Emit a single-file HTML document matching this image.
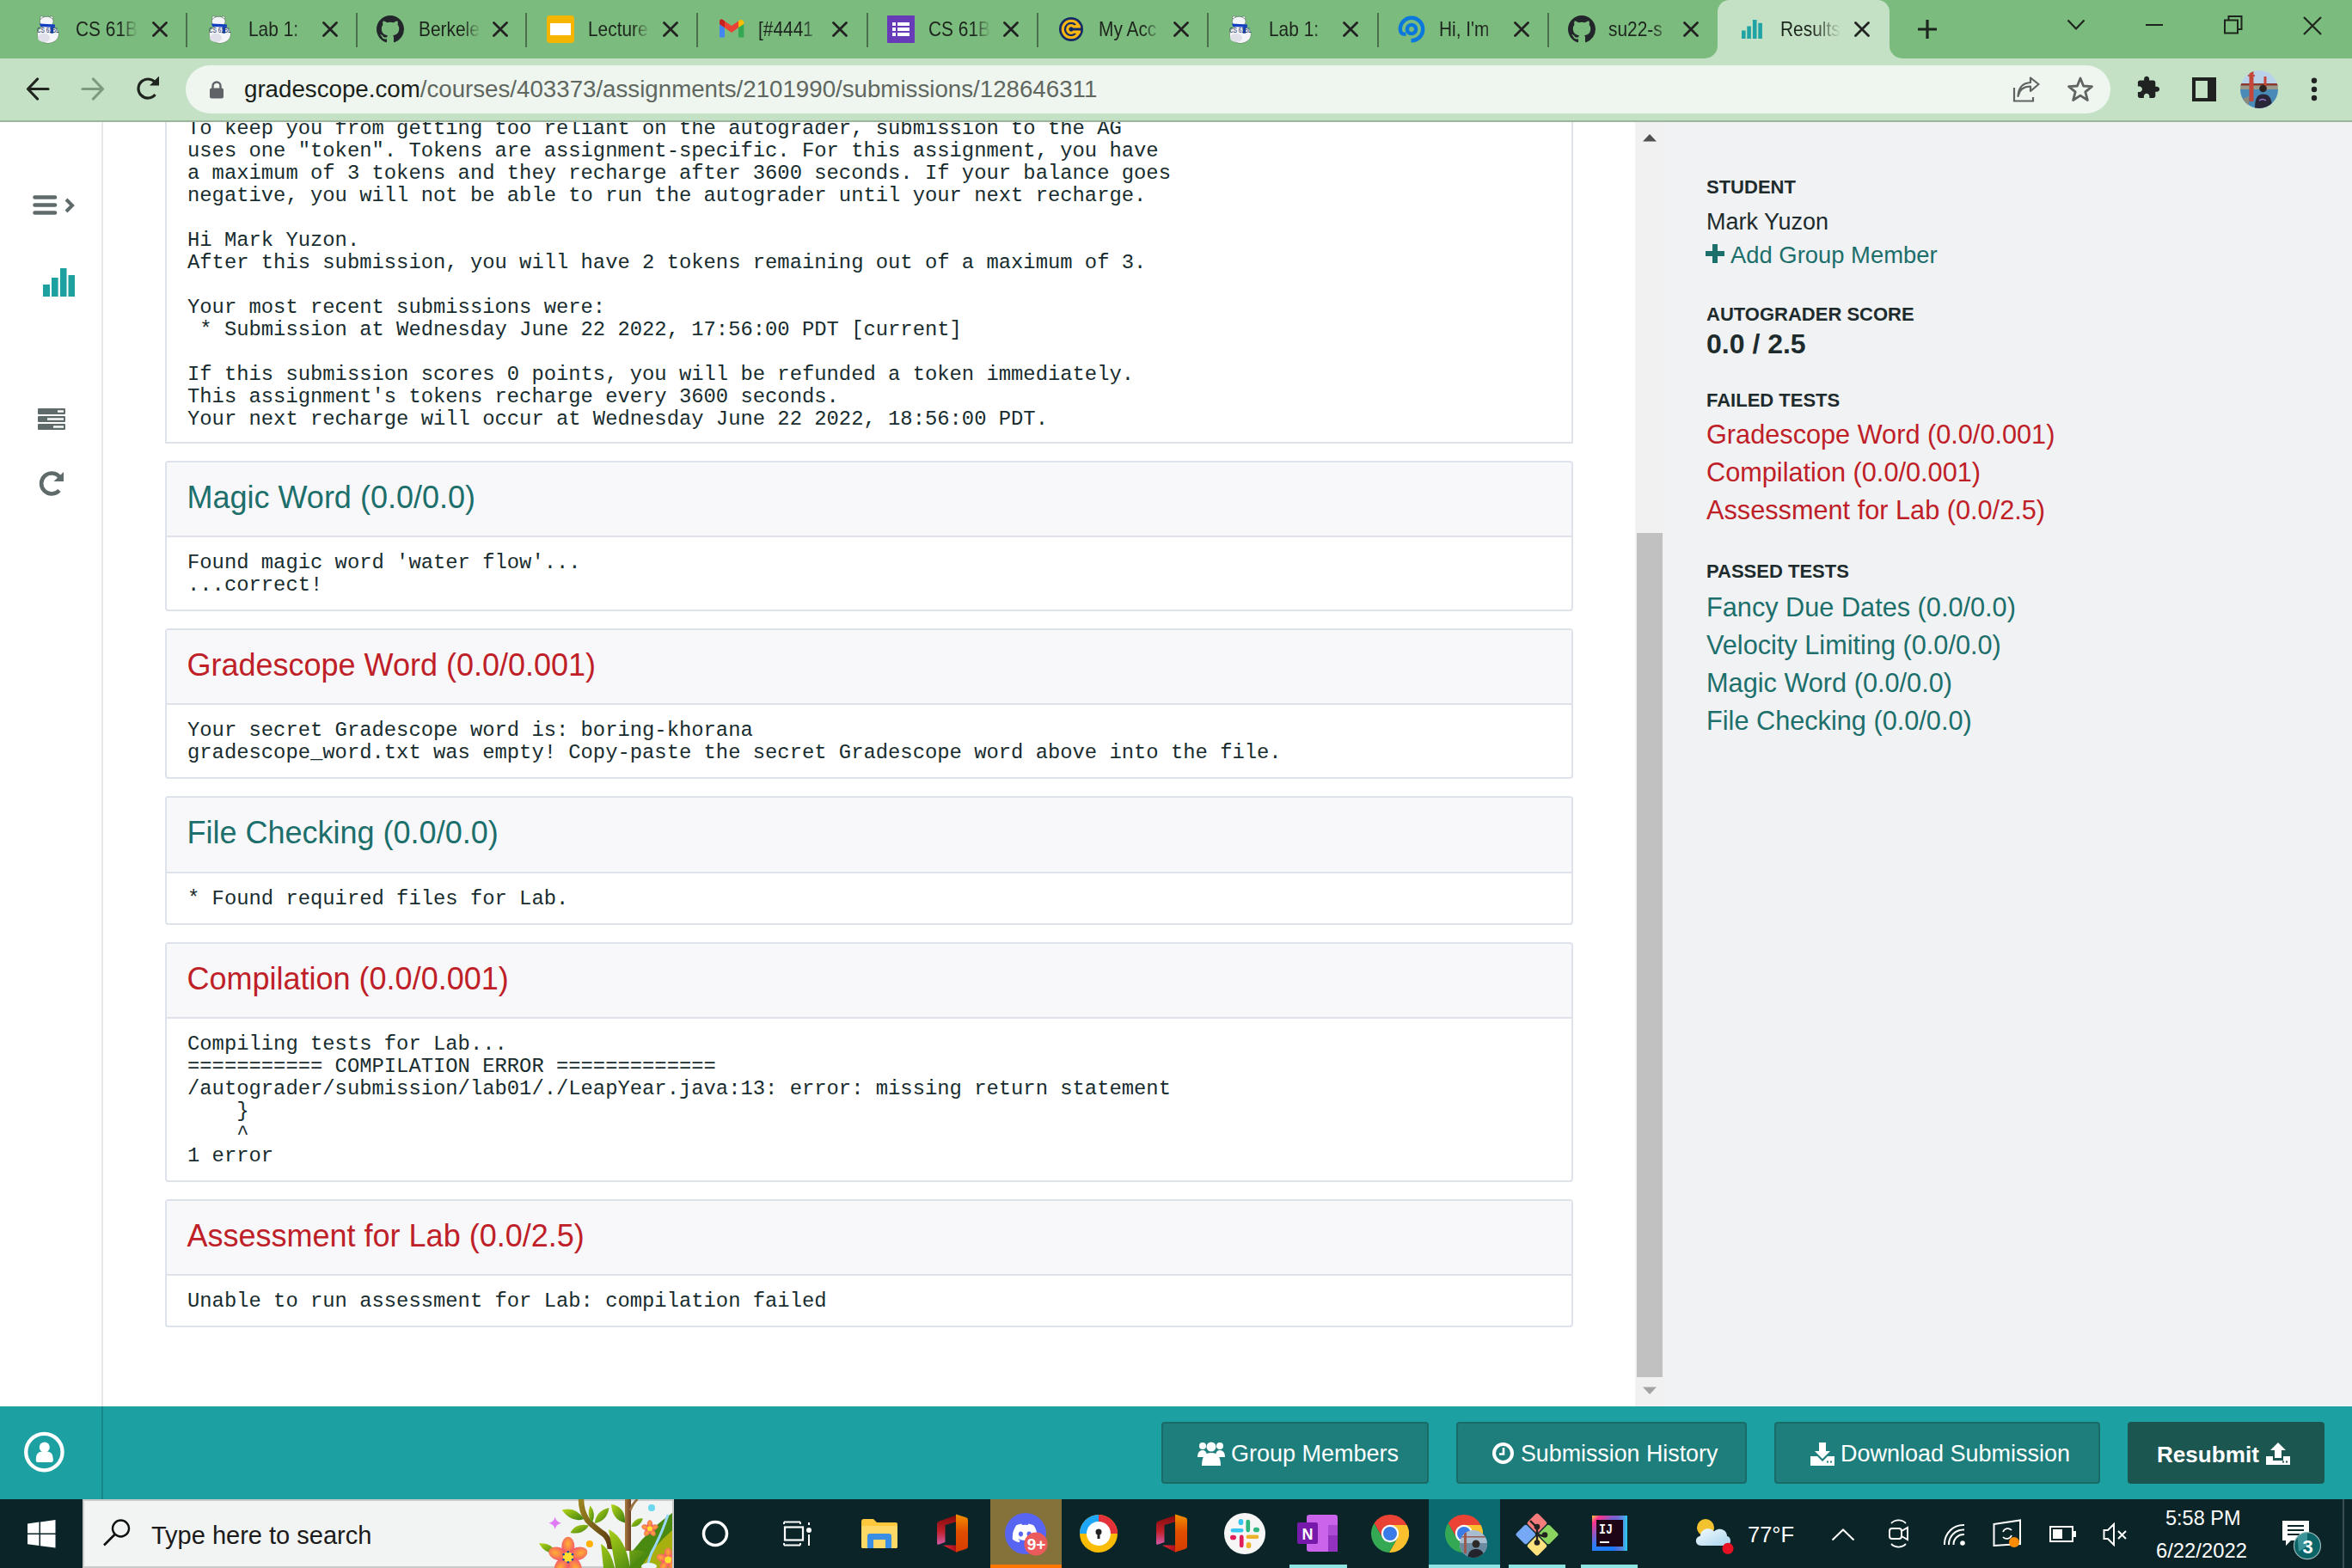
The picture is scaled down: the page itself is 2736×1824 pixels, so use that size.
<!DOCTYPE html><html><head><meta charset="utf-8"><style>html,body{margin:0;padding:0;width:2736px;height:1824px;overflow:hidden;background:#fff;position:relative}</style></head><body>
<div style="position:absolute;left:0px;top:0px;width:2736px;height:68px;background:#7bbb7d;"></div>
<div style="position:absolute;left:1998px;top:0px;width:200px;height:68px;background:#c4e1c5;border-radius:14px 14px 0 0"></div>
<svg style="position:absolute;left:1983px;top:53px;" width="15" height="15" viewBox="0 0 15 15"><path d="M15 0 V15 H0 A15 15 0 0 0 15 0Z" fill="#c4e1c5"/></svg>
<svg style="position:absolute;left:2198px;top:53px;" width="15" height="15" viewBox="0 0 15 15"><path d="M0 0 V15 H15 A15 15 0 0 1 0 0Z" fill="#c4e1c5"/></svg>
<svg style="position:absolute;left:41px;top:18px;" width="30" height="34" viewBox="0 0 30 34"><g fill="#f4f5f9" stroke="#55705a" stroke-width="0.7"><ellipse cx="14.85" cy="22" rx="12.3" ry="10.3"/><circle cx="7.7" cy="2.6" r="2.1"/><circle cx="18.8" cy="2.8" r="2.1"/><ellipse cx="13.2" cy="7" rx="8" ry="5.8"/></g><ellipse cx="14.85" cy="22" rx="12" ry="10" fill="#f4f5f9"/><ellipse cx="10" cy="26" rx="7" ry="5" fill="#dfe0e8"/><path d="M5 9.4 L22.9 10.4 V13.7 L6.2 13Z" fill="#1240c0"/><rect x="17.7" y="12" width="3.4" height="8.8" fill="#1846c0"/><text x="2" y="20.3" font-size="9" font-family="Liberation Sans" fill="#1d3468" textLength="25.7" lengthAdjust="spacingAndGlyphs">CS 61BL</text></svg>
<div style="position:absolute;left:88px;top:14px;width:83px;height:40px;overflow:hidden;font:24px/40px 'Liberation Sans', sans-serif;color:#1d241d;white-space:pre;transform:scaleX(0.87);transform-origin:0 0;-webkit-mask-image:linear-gradient(90deg,#000 72%,transparent 100%)">CS 61B</div>
<svg style="position:absolute;left:177px;top:25px;" width="18" height="18" viewBox="0 0 18 18"><path d="M1.5 1.5 L16.5 16.5 M16.5 1.5 L1.5 16.5" stroke="#222" stroke-width="2.8" stroke-linecap="round"/></svg>
<svg style="position:absolute;left:241px;top:18px;" width="30" height="34" viewBox="0 0 30 34"><g fill="#f4f5f9" stroke="#55705a" stroke-width="0.7"><ellipse cx="14.85" cy="22" rx="12.3" ry="10.3"/><circle cx="7.7" cy="2.6" r="2.1"/><circle cx="18.8" cy="2.8" r="2.1"/><ellipse cx="13.2" cy="7" rx="8" ry="5.8"/></g><ellipse cx="14.85" cy="22" rx="12" ry="10" fill="#f4f5f9"/><ellipse cx="10" cy="26" rx="7" ry="5" fill="#dfe0e8"/><path d="M5 9.4 L22.9 10.4 V13.7 L6.2 13Z" fill="#1240c0"/><rect x="17.7" y="12" width="3.4" height="8.8" fill="#1846c0"/><text x="2" y="20.3" font-size="9" font-family="Liberation Sans" fill="#1d3468" textLength="25.7" lengthAdjust="spacingAndGlyphs">CS 61BL</text></svg>
<div style="position:absolute;left:289px;top:14px;width:83px;height:40px;overflow:hidden;font:24px/40px 'Liberation Sans', sans-serif;color:#1d241d;white-space:pre;transform:scaleX(0.87);transform-origin:0 0;-webkit-mask-image:linear-gradient(90deg,#000 72%,transparent 100%)">Lab 1: </div>
<svg style="position:absolute;left:375px;top:25px;" width="18" height="18" viewBox="0 0 18 18"><path d="M1.5 1.5 L16.5 16.5 M16.5 1.5 L1.5 16.5" stroke="#222" stroke-width="2.8" stroke-linecap="round"/></svg>
<svg style="position:absolute;left:438px;top:18px;" width="32" height="32" viewBox="0 0 32 32"><path transform="scale(2)" fill="#22262a" d="M8 0C3.58 0 0 3.58 0 8c0 3.54 2.29 6.53 5.47 7.59.4.07.55-.17.55-.38 0-.19-.01-.82-.01-1.49-2.01.37-2.53-.49-2.69-.94-.09-.23-.48-.94-.82-1.13-.28-.15-.68-.52-.01-.53.63-.01 1.08.58 1.23.82.72 1.21 1.87.87 2.33.66.07-.52.28-.87.51-1.07-1.78-.2-3.64-.89-3.64-3.95 0-.87.31-1.59.82-2.15-.08-.2-.36-1.02.08-2.12 0 0 .67-.21 2.2.82.64-.18 1.32-.27 2-.27.68 0 1.36.09 2 .27 1.53-1.04 2.2-.82 2.2-.82.44 1.1.16 1.92.08 2.12.51.56.82 1.27.82 2.15 0 3.07-1.87 3.75-3.65 3.95.29.25.54.73.54 1.48 0 1.07-.01 1.93-.01 2.2 0 .21.15.46.55.38A8.013 8.013 0 0016 8c0-4.42-3.58-8-8-8z"/></svg>
<div style="position:absolute;left:487px;top:14px;width:83px;height:40px;overflow:hidden;font:24px/40px 'Liberation Sans', sans-serif;color:#1d241d;white-space:pre;transform:scaleX(0.87);transform-origin:0 0;-webkit-mask-image:linear-gradient(90deg,#000 72%,transparent 100%)">Berkeley</div>
<svg style="position:absolute;left:573px;top:25px;" width="18" height="18" viewBox="0 0 18 18"><path d="M1.5 1.5 L16.5 16.5 M16.5 1.5 L1.5 16.5" stroke="#222" stroke-width="2.8" stroke-linecap="round"/></svg>
<svg style="position:absolute;left:636px;top:18px;" width="32" height="32" viewBox="0 0 32 32"><rect x="0" y="0" width="32" height="32" rx="3.5" fill="#f4b400"/><rect x="4" y="9" width="24" height="14" fill="#fff"/></svg>
<div style="position:absolute;left:684px;top:14px;width:83px;height:40px;overflow:hidden;font:24px/40px 'Liberation Sans', sans-serif;color:#1d241d;white-space:pre;transform:scaleX(0.87);transform-origin:0 0;-webkit-mask-image:linear-gradient(90deg,#000 72%,transparent 100%)">Lecture</div>
<svg style="position:absolute;left:771px;top:25px;" width="18" height="18" viewBox="0 0 18 18"><path d="M1.5 1.5 L16.5 16.5 M16.5 1.5 L1.5 16.5" stroke="#222" stroke-width="2.8" stroke-linecap="round"/></svg>
<svg style="position:absolute;left:836px;top:22px;" width="30" height="24" viewBox="0 0 30 24"><rect x="1" y="6" width="6" height="15.5" rx="1" fill="#4285f4"/><rect x="23" y="6" width="6.3" height="15.5" rx="1" fill="#34a853"/><path d="M1 3.5 Q1 0 4 0.6 L15 8 L23 2.5 V10 L15 16 L1 6Z" fill="#ea4335"/><path d="M23 2.5 Q26.5 -0.5 29.3 3 V6 L23 10Z" fill="#fbbc04"/><path d="M1 3.5 Q1 0 4 0.6 L7 2.5 V10 L1 6Z" fill="#c5221f"/></svg>
<div style="position:absolute;left:882px;top:14px;width:83px;height:40px;overflow:hidden;font:24px/40px 'Liberation Sans', sans-serif;color:#1d241d;white-space:pre;transform:scaleX(0.87);transform-origin:0 0;-webkit-mask-image:linear-gradient(90deg,#000 72%,transparent 100%)">[#4441</div>
<svg style="position:absolute;left:968px;top:25px;" width="18" height="18" viewBox="0 0 18 18"><path d="M1.5 1.5 L16.5 16.5 M16.5 1.5 L1.5 16.5" stroke="#222" stroke-width="2.8" stroke-linecap="round"/></svg>
<svg style="position:absolute;left:1032px;top:18px;" width="32" height="32" viewBox="0 0 32 32"><rect x="0" y="0" width="32" height="32" rx="1" fill="#673ab7"/><g fill="#fff"><rect x="6" y="8" width="4" height="4"/><rect x="6" y="14" width="4" height="4"/><rect x="6" y="20" width="4" height="4"/><rect x="12" y="8" width="14" height="4"/><rect x="12" y="14" width="14" height="4"/><rect x="12" y="20" width="14" height="4"/></g></svg>
<div style="position:absolute;left:1080px;top:14px;width:83px;height:40px;overflow:hidden;font:24px/40px 'Liberation Sans', sans-serif;color:#1d241d;white-space:pre;transform:scaleX(0.87);transform-origin:0 0;-webkit-mask-image:linear-gradient(90deg,#000 72%,transparent 100%)">CS 61B</div>
<svg style="position:absolute;left:1167px;top:25px;" width="18" height="18" viewBox="0 0 18 18"><path d="M1.5 1.5 L16.5 16.5 M16.5 1.5 L1.5 16.5" stroke="#222" stroke-width="2.8" stroke-linecap="round"/></svg>
<svg style="position:absolute;left:1230px;top:18px;" width="32" height="32" viewBox="0 0 32 32"><circle cx="16" cy="16" r="14" fill="#142c66"/><circle cx="16" cy="16" r="9.75" fill="none" stroke="#fbb614" stroke-width="3.1"/><circle cx="16" cy="16" r="4.15" fill="none" stroke="#fbb614" stroke-width="3.5"/><path d="M19.5 12 L23 9.5 L27 12 V20 L23 22.5 L19.5 20Z" fill="#fbb614"/><rect x="15" y="14.55" width="14" height="2.9" fill="#142c66"/><circle cx="16" cy="16" r="2.5" fill="#142c66"/></svg>
<div style="position:absolute;left:1278px;top:14px;width:83px;height:40px;overflow:hidden;font:24px/40px 'Liberation Sans', sans-serif;color:#1d241d;white-space:pre;transform:scaleX(0.87);transform-origin:0 0;-webkit-mask-image:linear-gradient(90deg,#000 72%,transparent 100%)">My Acc</div>
<svg style="position:absolute;left:1365px;top:25px;" width="18" height="18" viewBox="0 0 18 18"><path d="M1.5 1.5 L16.5 16.5 M16.5 1.5 L1.5 16.5" stroke="#222" stroke-width="2.8" stroke-linecap="round"/></svg>
<svg style="position:absolute;left:1428px;top:18px;" width="30" height="34" viewBox="0 0 30 34"><g fill="#f4f5f9" stroke="#55705a" stroke-width="0.7"><ellipse cx="14.85" cy="22" rx="12.3" ry="10.3"/><circle cx="7.7" cy="2.6" r="2.1"/><circle cx="18.8" cy="2.8" r="2.1"/><ellipse cx="13.2" cy="7" rx="8" ry="5.8"/></g><ellipse cx="14.85" cy="22" rx="12" ry="10" fill="#f4f5f9"/><ellipse cx="10" cy="26" rx="7" ry="5" fill="#dfe0e8"/><path d="M5 9.4 L22.9 10.4 V13.7 L6.2 13Z" fill="#1240c0"/><rect x="17.7" y="12" width="3.4" height="8.8" fill="#1846c0"/><text x="2" y="20.3" font-size="9" font-family="Liberation Sans" fill="#1d3468" textLength="25.7" lengthAdjust="spacingAndGlyphs">CS 61BL</text></svg>
<div style="position:absolute;left:1476px;top:14px;width:83px;height:40px;overflow:hidden;font:24px/40px 'Liberation Sans', sans-serif;color:#1d241d;white-space:pre;transform:scaleX(0.87);transform-origin:0 0;-webkit-mask-image:linear-gradient(90deg,#000 72%,transparent 100%)">Lab 1: </div>
<svg style="position:absolute;left:1562px;top:25px;" width="18" height="18" viewBox="0 0 18 18"><path d="M1.5 1.5 L16.5 16.5 M16.5 1.5 L1.5 16.5" stroke="#222" stroke-width="2.8" stroke-linecap="round"/></svg>
<svg style="position:absolute;left:1626px;top:18px;" width="34" height="34" viewBox="0 0 34 34"><g fill="none" stroke="#0a78dc" stroke-width="4.4"><path d="M15.5 29.2 A13.2 13.2 0 1 0 2.8 16 Q3 22.5 9.5 21.5"/><circle cx="16" cy="16" r="5.1"/></g></svg>
<div style="position:absolute;left:1674px;top:14px;width:83px;height:40px;overflow:hidden;font:24px/40px 'Liberation Sans', sans-serif;color:#1d241d;white-space:pre;transform:scaleX(0.87);transform-origin:0 0;-webkit-mask-image:linear-gradient(90deg,#000 72%,transparent 100%)">Hi, I'm</div>
<svg style="position:absolute;left:1761px;top:25px;" width="18" height="18" viewBox="0 0 18 18"><path d="M1.5 1.5 L16.5 16.5 M16.5 1.5 L1.5 16.5" stroke="#222" stroke-width="2.8" stroke-linecap="round"/></svg>
<svg style="position:absolute;left:1824px;top:18px;" width="32" height="32" viewBox="0 0 32 32"><path transform="scale(2)" fill="#22262a" d="M8 0C3.58 0 0 3.58 0 8c0 3.54 2.29 6.53 5.47 7.59.4.07.55-.17.55-.38 0-.19-.01-.82-.01-1.49-2.01.37-2.53-.49-2.69-.94-.09-.23-.48-.94-.82-1.13-.28-.15-.68-.52-.01-.53.63-.01 1.08.58 1.23.82.72 1.21 1.87.87 2.33.66.07-.52.28-.87.51-1.07-1.78-.2-3.64-.89-3.64-3.95 0-.87.31-1.59.82-2.15-.08-.2-.36-1.02.08-2.12 0 0 .67-.21 2.2.82.64-.18 1.32-.27 2-.27.68 0 1.36.09 2 .27 1.53-1.04 2.2-.82 2.2-.82.44 1.1.16 1.92.08 2.12.51.56.82 1.27.82 2.15 0 3.07-1.87 3.75-3.65 3.95.29.25.54.73.54 1.48 0 1.07-.01 1.93-.01 2.2 0 .21.15.46.55.38A8.013 8.013 0 0016 8c0-4.42-3.58-8-8-8z"/></svg>
<div style="position:absolute;left:1871px;top:14px;width:83px;height:40px;overflow:hidden;font:24px/40px 'Liberation Sans', sans-serif;color:#1d241d;white-space:pre;transform:scaleX(0.87);transform-origin:0 0;-webkit-mask-image:linear-gradient(90deg,#000 72%,transparent 100%)">su22-s</div>
<svg style="position:absolute;left:1958px;top:25px;" width="18" height="18" viewBox="0 0 18 18"><path d="M1.5 1.5 L16.5 16.5 M16.5 1.5 L1.5 16.5" stroke="#222" stroke-width="2.8" stroke-linecap="round"/></svg>
<div style="position:absolute;left:215.5px;top:15px;width:2px;height:40px;background:#4b6e4c;"></div>
<div style="position:absolute;left:413.5px;top:15px;width:2px;height:40px;background:#4b6e4c;"></div>
<div style="position:absolute;left:611px;top:15px;width:2px;height:40px;background:#4b6e4c;"></div>
<div style="position:absolute;left:810px;top:15px;width:2px;height:40px;background:#4b6e4c;"></div>
<div style="position:absolute;left:1007.5px;top:15px;width:2px;height:40px;background:#4b6e4c;"></div>
<div style="position:absolute;left:1206px;top:15px;width:2px;height:40px;background:#4b6e4c;"></div>
<div style="position:absolute;left:1404px;top:15px;width:2px;height:40px;background:#4b6e4c;"></div>
<div style="position:absolute;left:1602px;top:15px;width:2px;height:40px;background:#4b6e4c;"></div>
<div style="position:absolute;left:1800px;top:15px;width:2px;height:40px;background:#4b6e4c;"></div>
<svg style="position:absolute;left:2026px;top:23px;" width="27" height="24" viewBox="0 0 27 24"><g transform="scale(1.0)"><rect x="0" y="12.5" width="4.6" height="9.5" fill="#1fa3a5"/><rect x="6.3" y="7.5" width="4.6" height="14.5" fill="#1fa3a5"/><rect x="12.9" y="0" width="4.6" height="22" fill="#1fa3a5"/><rect x="19.3" y="3.8" width="4.6" height="18.2" fill="#1fa3a5"/></g></svg>
<div style="position:absolute;left:2071px;top:14px;width:83px;height:40px;overflow:hidden;font:24px/40px 'Liberation Sans', sans-serif;color:#1d241d;white-space:pre;transform:scaleX(0.87);transform-origin:0 0;-webkit-mask-image:linear-gradient(90deg,#000 52%,transparent 98%)">Results</div>
<svg style="position:absolute;left:2157px;top:25px;" width="18" height="18" viewBox="0 0 18 18"><path d="M1.5 1.5 L16.5 16.5 M16.5 1.5 L1.5 16.5" stroke="#222" stroke-width="2.8" stroke-linecap="round"/></svg>
<svg style="position:absolute;left:2230px;top:22px;" width="24" height="24" viewBox="0 0 24 24"><path d="M12 1 V23 M1 12 H23" stroke="#1d241d" stroke-width="3.2"/></svg>
<svg style="position:absolute;left:2404px;top:22px;" width="22" height="14" viewBox="0 0 22 14"><path d="M1.5 1.5 L11 11.5 L20.5 1.5" fill="none" stroke="#1d241d" stroke-width="2.2"/></svg>
<div style="position:absolute;left:2496px;top:28px;width:20px;height:2px;background:#1d241d;"></div>
<svg style="position:absolute;left:2587px;top:18px;" width="22" height="22" viewBox="0 0 22 22"><rect x="1" y="5.5" width="15" height="15" fill="none" stroke="#1d241d" stroke-width="2"/><path d="M5.5 5.5 V1 H20.5 V16 H16" fill="none" stroke="#1d241d" stroke-width="2"/></svg>
<svg style="position:absolute;left:2679px;top:19px;" width="22" height="22" viewBox="0 0 22 22"><path d="M1 1 L21 21 M21 1 L1 21" stroke="#1d241d" stroke-width="2.2"/></svg>
<div style="position:absolute;left:0px;top:68px;width:2736px;height:72px;background:#c4e1c5;"></div>
<div style="position:absolute;left:0px;top:140px;width:2736px;height:2px;background:#9cb69d;"></div>
<svg style="position:absolute;left:30px;top:90px;" width="28" height="28" viewBox="0 0 28 28"><path d="M26 13.5 H4 M13.5 2 L2.5 13.5 L13.5 25" fill="none" stroke="#1f241f" stroke-width="3.2" stroke-linecap="round" stroke-linejoin="round"/></svg>
<svg style="position:absolute;left:94px;top:90px;" width="28" height="28" viewBox="0 0 28 28"><path d="M2 13.5 H24 M14.5 2 L25.5 13.5 L14.5 25" fill="none" stroke="#7d9a7e" stroke-width="3.2" stroke-linecap="round" stroke-linejoin="round"/></svg>
<svg style="position:absolute;left:157px;top:89px;" width="30" height="30" viewBox="0 0 30 30"><path d="M23.5 21 A11 11 0 1 1 24.5 8.5" fill="none" stroke="#1f241f" stroke-width="3.2"/><path d="M17 10.5 L28 10.5 L28 -0.5Z" fill="#1f241f"/></svg>
<div style="position:absolute;left:216px;top:76px;width:2239px;height:56px;background:#eff6ef;border-radius:28px"></div>
<svg style="position:absolute;left:243px;top:93px;" width="18" height="22" viewBox="0 0 18 22"><path d="M4.5 10 V7 A4.5 4.5 0 0 1 13.5 7 V10" fill="none" stroke="#5f6368" stroke-width="2.4"/><rect x="1" y="9.5" width="16" height="12" rx="2" fill="#5f6368"/></svg>
<div style="position:absolute;left:284px;top:84px;font:27.7px/40px 'Liberation Sans', sans-serif;color:#5f6760;white-space:pre"><span style="color:#1a1f1a">gradescope.com</span>/courses/403373/assignments/2101990/submissions/128646311</div>
<svg style="position:absolute;left:2340px;top:89px;" width="34" height="31" viewBox="0 0 34 31"><path d="M3 13 V28.5 H25 V24" fill="none" stroke="#606362" stroke-width="2.2"/><path d="M7.5 23 C9 15 14.5 11.5 22 11.5 V17 L31.5 9 L22 1.5 V7 C13 7.5 8 13.5 7.5 23Z" fill="none" stroke="#606362" stroke-width="2.2" stroke-linejoin="round"/></svg>
<svg style="position:absolute;left:2404px;top:88px;" width="32" height="31" viewBox="0 0 32 31"><path d="M16 3 L19.6 12 L29.5 12.6 L21.8 18.8 L24.4 28.5 L16 23.1 L7.6 28.5 L10.2 18.8 L2.5 12.6 L12.4 12Z" fill="none" stroke="#606362" stroke-width="2.8" stroke-linejoin="round"/></svg>
<svg style="position:absolute;left:2485px;top:88px;" width="30" height="30" viewBox="0 0 30 30"><path transform="translate(-0.5 -0.5) scale(1.2)" fill="#1f2220" d="M20.5 11H19V7c0-1.1-.9-2-2-2h-4V3.5C13 2.12 11.88 1 10.5 1S8 2.12 8 3.5V5H4c-1.1 0-1.99.9-1.99 2v3.8H3.5c1.49 0 2.7 1.21 2.7 2.7s-1.21 2.7-2.7 2.7H2V20c0 1.1.9 2 2 2h3.8v-1.5c0-1.49 1.21-2.7 2.7-2.7 1.49 0 2.7 1.21 2.7 2.7V22H17c1.1 0 2-.9 2-2v-4h1.5c1.38 0 2.5-1.12 2.5-2.5S21.88 11 20.5 11z"/></svg>
<svg style="position:absolute;left:2550px;top:90px;" width="28" height="28" viewBox="0 0 28 28"><rect x="2" y="2" width="24" height="24" fill="none" stroke="#1f2220" stroke-width="4"/><rect x="18" y="0" width="10" height="28" fill="#1f2220"/></svg>
<svg style="position:absolute;left:2606px;top:82px;" width="44" height="44" viewBox="0 0 44 44"><defs><clipPath id="av"><circle cx="22" cy="22" r="22"/></clipPath></defs><g clip-path="url(#av)"><rect width="44" height="44" fill="#b8d2ea"/><rect y="16" width="44" height="6" fill="#9a9a8a"/><rect y="22" width="44" height="22" fill="#4a8ab8"/><rect y="15" width="44" height="2.5" fill="#8a3a30"/><rect x="10.5" y="0" width="5" height="36" fill="#c4473a"/><rect x="9" y="5" width="8" height="1.8" fill="#c4473a"/><rect x="27.5" y="7" width="3" height="16" fill="#c4473a"/><path d="M0 34 L10 30 L10 44 L0 44Z" fill="#8a8a7a"/><circle cx="26.5" cy="21" r="4.3" fill="#2a2522"/><path d="M17 44 C17 32 20 27.5 26.5 27.5 C33 27.5 37 31 37 44Z" fill="#2a2838"/><path d="M22 35 Q26 32 30 35" stroke="#9a7ad8" stroke-width="1.5" fill="none"/></g></svg>
<svg style="position:absolute;left:2686px;top:90px;" width="12" height="28" viewBox="0 0 12 28"><circle cx="6" cy="3.8" r="3.2" fill="#1f2220"/><circle cx="6" cy="14" r="3.2" fill="#1f2220"/><circle cx="6" cy="24" r="3.2" fill="#1f2220"/></svg>
<div style="position:absolute;left:0px;top:142px;width:118px;height:1494px;background:#fff;"></div>
<div style="position:absolute;left:118px;top:142px;width:2px;height:1494px;background:#e6e8ea;"></div>
<div style="position:absolute;left:120px;top:142px;width:1782px;height:1494px;background:#fff;"></div>
<div style="position:absolute;left:1902px;top:142px;width:34px;height:1494px;background:#f1f1f1;"></div>
<div style="position:absolute;left:1904px;top:620px;width:30px;height:982px;background:#c1c1c1;"></div>
<svg style="position:absolute;left:1910px;top:155px;" width="18" height="10" viewBox="0 0 18 10"><path d="M1 9.5 L9 1 L17 9.5Z" fill="#505050"/></svg>
<svg style="position:absolute;left:1910px;top:1613px;" width="18" height="10" viewBox="0 0 18 10"><path d="M1 0.5 L9 9 L17 0.5Z" fill="#a3a3a3"/></svg>
<div style="position:absolute;left:1936px;top:142px;width:800px;height:1494px;background:#f1f2f4;"></div>
<svg style="position:absolute;left:36px;top:225px;" width="54" height="28" viewBox="0 0 54 28"><g stroke="#5f6b6b" stroke-width="4.6" stroke-linecap="round"><path d="M4.5 4.5 H28 M4.5 13.5 H28 M4.5 22.5 H28"/></g><path d="M41 7 L48 14 L41 21" fill="none" stroke="#5f6b6b" stroke-width="4"/></svg>
<svg style="position:absolute;left:50px;top:312px;" width="38" height="34" viewBox="0 0 38 34"><rect x="0" y="19" width="8" height="14" fill="#1ca0a0"/><rect x="10" y="11" width="7.6" height="22" fill="#1ca0a0"/><rect x="20" y="0" width="7.5" height="33" fill="#1ca0a0"/><rect x="29.5" y="8" width="7.5" height="25" fill="#1ca0a0"/></svg>
<svg style="position:absolute;left:43px;top:474px;" width="34" height="28" viewBox="0 0 34 28"><rect x="1" y="1" width="32" height="7" rx="1" fill="#5f6b6b"/><rect x="1" y="10" width="32" height="7" rx="1" fill="#5f6b6b"/><rect x="1" y="19" width="32" height="7" rx="1" fill="#5f6b6b"/><rect x="24" y="3.3" width="7" height="2.4" fill="#fff"/><rect x="12" y="12.3" width="19" height="2.4" fill="#fff"/><rect x="19" y="21.3" width="12" height="2.4" fill="#fff"/></svg>
<svg style="position:absolute;left:44px;top:547px;" width="32" height="32" viewBox="0 0 32 32"><path d="M25 23.5 A12 12 0 1 1 25.5 8" fill="none" stroke="#5f6b6b" stroke-width="4.6"/><path d="M18.5 13 H30 V2Z" fill="#5f6b6b"/></svg>
<div style="position:absolute;left:120px;top:142px;width:1782px;height:1494px;overflow:hidden">
<div style="position:absolute;left:72px;top:-20px;width:1638px;height:394px;background:#fff;box-sizing:border-box;border:2px solid #dee2ea;border-top:none"></div>
<div style="position:absolute;left:98px;top:-3.97px;font:normal 23.83px/23.83px 'Liberation Mono', monospace;color:#172c2e;white-space:pre;">To keep you from getting too reliant on the autograder, submission to the AG</div>
<div style="position:absolute;left:98px;top:22.03px;font:normal 23.83px/23.83px 'Liberation Mono', monospace;color:#172c2e;white-space:pre;">uses one "token". Tokens are assignment-specific. For this assignment, you have</div>
<div style="position:absolute;left:98px;top:48.03px;font:normal 23.83px/23.83px 'Liberation Mono', monospace;color:#172c2e;white-space:pre;">a maximum of 3 tokens and they recharge after 3600 seconds. If your balance goes</div>
<div style="position:absolute;left:98px;top:74.03px;font:normal 23.83px/23.83px 'Liberation Mono', monospace;color:#172c2e;white-space:pre;">negative, you will not be able to run the autograder until your next recharge.</div>
<div style="position:absolute;left:98px;top:126.03px;font:normal 23.83px/23.83px 'Liberation Mono', monospace;color:#172c2e;white-space:pre;">Hi Mark Yuzon.</div>
<div style="position:absolute;left:98px;top:152.03px;font:normal 23.83px/23.83px 'Liberation Mono', monospace;color:#172c2e;white-space:pre;">After this submission, you will have 2 tokens remaining out of a maximum of 3.</div>
<div style="position:absolute;left:98px;top:204.03px;font:normal 23.83px/23.83px 'Liberation Mono', monospace;color:#172c2e;white-space:pre;">Your most recent submissions were:</div>
<div style="position:absolute;left:98px;top:230.03px;font:normal 23.83px/23.83px 'Liberation Mono', monospace;color:#172c2e;white-space:pre;"> * Submission at Wednesday June 22 2022, 17:56:00 PDT [current]</div>
<div style="position:absolute;left:98px;top:282.03px;font:normal 23.83px/23.83px 'Liberation Mono', monospace;color:#172c2e;white-space:pre;">If this submission scores 0 points, you will be refunded a token immediately.</div>
<div style="position:absolute;left:98px;top:308.03px;font:normal 23.83px/23.83px 'Liberation Mono', monospace;color:#172c2e;white-space:pre;">This assignment's tokens recharge every 3600 seconds.</div>
<div style="position:absolute;left:98px;top:334.03px;font:normal 23.83px/23.83px 'Liberation Mono', monospace;color:#172c2e;white-space:pre;">Your next recharge will occur at Wednesday June 22 2022, 18:56:00 PDT.</div>
<div style="position:absolute;left:72px;top:394px;width:1638px;height:175px;background:#fff;box-sizing:border-box;border:2px solid #dee2ea;border-radius:4px"></div>
<div style="position:absolute;left:74px;top:396px;width:1634px;height:85px;background:#f8f8fa;border-radius:2px 2px 0 0"></div>
<div style="position:absolute;left:74px;top:481px;width:1634px;height:2px;background:#dee2ea;"></div>
<div style="position:absolute;left:97.5px;top:419.13px;font:normal 36px/36px 'Liberation Sans', sans-serif;color:#1c6f6b;white-space:pre;">Magic Word (0.0/0.0)</div>
<div style="position:absolute;left:98px;top:501.43px;font:normal 23.83px/23.83px 'Liberation Mono', monospace;color:#172c2e;white-space:pre;">Found magic word 'water flow'...</div>
<div style="position:absolute;left:98px;top:527.43px;font:normal 23.83px/23.83px 'Liberation Mono', monospace;color:#172c2e;white-space:pre;">...correct!</div>
<div style="position:absolute;left:72px;top:589px;width:1638px;height:175px;background:#fff;box-sizing:border-box;border:2px solid #dee2ea;border-radius:4px"></div>
<div style="position:absolute;left:74px;top:591px;width:1634px;height:85px;background:#f8f8fa;border-radius:2px 2px 0 0"></div>
<div style="position:absolute;left:74px;top:676px;width:1634px;height:2px;background:#dee2ea;"></div>
<div style="position:absolute;left:97.5px;top:614.13px;font:normal 36px/36px 'Liberation Sans', sans-serif;color:#bf2027;white-space:pre;">Gradescope Word (0.0/0.001)</div>
<div style="position:absolute;left:98px;top:696.43px;font:normal 23.83px/23.83px 'Liberation Mono', monospace;color:#172c2e;white-space:pre;">Your secret Gradescope word is: boring-khorana</div>
<div style="position:absolute;left:98px;top:722.43px;font:normal 23.83px/23.83px 'Liberation Mono', monospace;color:#172c2e;white-space:pre;">gradescope_word.txt was empty! Copy-paste the secret Gradescope word above into the file.</div>
<div style="position:absolute;left:72px;top:784px;width:1638px;height:150px;background:#fff;box-sizing:border-box;border:2px solid #dee2ea;border-radius:4px"></div>
<div style="position:absolute;left:74px;top:786px;width:1634px;height:86px;background:#f8f8fa;border-radius:2px 2px 0 0"></div>
<div style="position:absolute;left:74px;top:872px;width:1634px;height:2px;background:#dee2ea;"></div>
<div style="position:absolute;left:97.5px;top:809.13px;font:normal 36px/36px 'Liberation Sans', sans-serif;color:#1c6f6b;white-space:pre;">File Checking (0.0/0.0)</div>
<div style="position:absolute;left:98px;top:892.43px;font:normal 23.83px/23.83px 'Liberation Mono', monospace;color:#172c2e;white-space:pre;">* Found required files for Lab.</div>
<div style="position:absolute;left:72px;top:954px;width:1638px;height:279px;background:#fff;box-sizing:border-box;border:2px solid #dee2ea;border-radius:4px"></div>
<div style="position:absolute;left:74px;top:956px;width:1634px;height:85px;background:#f8f8fa;border-radius:2px 2px 0 0"></div>
<div style="position:absolute;left:74px;top:1041px;width:1634px;height:2px;background:#dee2ea;"></div>
<div style="position:absolute;left:97.5px;top:979.13px;font:normal 36px/36px 'Liberation Sans', sans-serif;color:#bf2027;white-space:pre;">Compilation (0.0/0.001)</div>
<div style="position:absolute;left:98px;top:1061.43px;font:normal 23.83px/23.83px 'Liberation Mono', monospace;color:#172c2e;white-space:pre;">Compiling tests for Lab...</div>
<div style="position:absolute;left:98px;top:1087.43px;font:normal 23.83px/23.83px 'Liberation Mono', monospace;color:#172c2e;white-space:pre;">=========== COMPILATION ERROR =============</div>
<div style="position:absolute;left:98px;top:1113.43px;font:normal 23.83px/23.83px 'Liberation Mono', monospace;color:#172c2e;white-space:pre;">/autograder/submission/lab01/./LeapYear.java:13: error: missing return statement</div>
<div style="position:absolute;left:98px;top:1139.43px;font:normal 23.83px/23.83px 'Liberation Mono', monospace;color:#172c2e;white-space:pre;">    }</div>
<div style="position:absolute;left:98px;top:1165.43px;font:normal 23.83px/23.83px 'Liberation Mono', monospace;color:#172c2e;white-space:pre;">    ^</div>
<div style="position:absolute;left:98px;top:1191.43px;font:normal 23.83px/23.83px 'Liberation Mono', monospace;color:#172c2e;white-space:pre;">1 error</div>
<div style="position:absolute;left:72px;top:1253px;width:1638px;height:149px;background:#fff;box-sizing:border-box;border:2px solid #dee2ea;border-radius:4px"></div>
<div style="position:absolute;left:74px;top:1255px;width:1634px;height:85px;background:#f8f8fa;border-radius:2px 2px 0 0"></div>
<div style="position:absolute;left:74px;top:1340px;width:1634px;height:2px;background:#dee2ea;"></div>
<div style="position:absolute;left:97.5px;top:1278.13px;font:normal 36px/36px 'Liberation Sans', sans-serif;color:#bf2027;white-space:pre;">Assessment for Lab (0.0/2.5)</div>
<div style="position:absolute;left:98px;top:1360.43px;font:normal 23.83px/23.83px 'Liberation Mono', monospace;color:#172c2e;white-space:pre;">Unable to run assessment for Lab: compilation failed</div>
</div>
<div style="position:absolute;left:1985px;top:206.58px;font:bold 22px/22px 'Liberation Sans', sans-serif;color:#1e2b2d;white-space:pre;">STUDENT</div>
<div style="position:absolute;left:1985px;top:245.14px;font:normal 27px/27px 'Liberation Sans', sans-serif;color:#1e2b2d;white-space:pre;">Mark Yuzon</div>
<svg style="position:absolute;left:1984px;top:284px;" width="22" height="22" viewBox="0 0 22 22"><path d="M11 0 V22 M0 11 H22" stroke="#1c6f6b" stroke-width="6"/></svg>
<div style="position:absolute;left:2013px;top:282.81px;font:normal 27.4px/27.4px 'Liberation Sans', sans-serif;color:#1c6f6b;white-space:pre;">Add Group Member</div>
<div style="position:absolute;left:1985px;top:354.78px;font:bold 22px/22px 'Liberation Sans', sans-serif;color:#1e2b2d;white-space:pre;">AUTOGRADER SCORE</div>
<div style="position:absolute;left:1985px;top:383.71px;font:bold 32px/32px 'Liberation Sans', sans-serif;color:#1e2b2d;white-space:pre;">0.0 / 2.5</div>
<div style="position:absolute;left:1985px;top:454.68px;font:bold 22px/22px 'Liberation Sans', sans-serif;color:#1e2b2d;white-space:pre;">FAILED TESTS</div>
<div style="position:absolute;left:1985px;top:491.31px;font:normal 30.7px/30.7px 'Liberation Sans', sans-serif;color:#bf2027;white-space:pre;">Gradescope Word (0.0/0.001)</div>
<div style="position:absolute;left:1985px;top:535.31px;font:normal 30.7px/30.7px 'Liberation Sans', sans-serif;color:#bf2027;white-space:pre;">Compilation (0.0/0.001)</div>
<div style="position:absolute;left:1985px;top:579.31px;font:normal 30.7px/30.7px 'Liberation Sans', sans-serif;color:#bf2027;white-space:pre;">Assessment for Lab (0.0/2.5)</div>
<div style="position:absolute;left:1985px;top:654.38px;font:bold 22px/22px 'Liberation Sans', sans-serif;color:#1e2b2d;white-space:pre;">PASSED TESTS</div>
<div style="position:absolute;left:1985px;top:691.51px;font:normal 30.7px/30.7px 'Liberation Sans', sans-serif;color:#1c6f6b;white-space:pre;">Fancy Due Dates (0.0/0.0)</div>
<div style="position:absolute;left:1985px;top:735.51px;font:normal 30.7px/30.7px 'Liberation Sans', sans-serif;color:#1c6f6b;white-space:pre;">Velocity Limiting (0.0/0.0)</div>
<div style="position:absolute;left:1985px;top:779.51px;font:normal 30.7px/30.7px 'Liberation Sans', sans-serif;color:#1c6f6b;white-space:pre;">Magic Word (0.0/0.0)</div>
<div style="position:absolute;left:1985px;top:823.51px;font:normal 30.7px/30.7px 'Liberation Sans', sans-serif;color:#1c6f6b;white-space:pre;">File Checking (0.0/0.0)</div>
<div style="position:absolute;left:0px;top:1636px;width:2736px;height:108px;background:#1ca0a1;"></div>
<div style="position:absolute;left:118px;top:1636px;width:2px;height:108px;background:#18898a;"></div>
<svg style="position:absolute;left:27px;top:1665px;" width="48" height="48" viewBox="0 0 48 48"><circle cx="24.4" cy="24.1" r="21.2" fill="none" stroke="#fff" stroke-width="4.3"/><circle cx="24.8" cy="18.4" r="6" fill="#fff"/><path d="M14.8 32 Q14.8 24 21.5 23.5 H28.1 Q34.8 24 34.8 32 V34 Q34.8 36 32.8 36 H16.8 Q14.8 36 14.8 34Z" fill="#fff"/></svg>
<div style="position:absolute;left:1351px;top:1654px;width:311px;height:72px;background:#1e7e7c;box-sizing:border-box;border:2px solid #1a6a67;border-radius:4px"></div>
<div style="position:absolute;left:1694px;top:1654px;width:338px;height:72px;background:#1e7e7c;box-sizing:border-box;border:2px solid #1a6a67;border-radius:4px"></div>
<div style="position:absolute;left:2064px;top:1654px;width:379px;height:72px;background:#1e7e7c;box-sizing:border-box;border:2px solid #1a6a67;border-radius:4px"></div>
<div style="position:absolute;left:2475px;top:1654px;width:229px;height:72px;background:#1c5651;box-sizing:border-box;border:2px solid #1c5651;border-radius:4px"></div>
<div style="position:absolute;left:1432px;top:1678.14px;font:normal 27px/27px 'Liberation Sans', sans-serif;color:#fff;white-space:pre;">Group Members</div>
<div style="position:absolute;left:1769px;top:1678.31px;font:normal 26.8px/26.8px 'Liberation Sans', sans-serif;color:#fff;white-space:pre;">Submission History</div>
<div style="position:absolute;left:2141px;top:1678.14px;font:normal 27px/27px 'Liberation Sans', sans-serif;color:#fff;white-space:pre;">Download Submission</div>
<div style="position:absolute;left:2509px;top:1678.91px;font:bold 26.1px/26.1px 'Liberation Sans', sans-serif;color:#fff;white-space:pre;">Resubmit</div>
<svg style="position:absolute;left:1393px;top:1677px;" width="32" height="28" viewBox="0 0 32 28"><circle cx="16" cy="6" r="5.5" fill="#fff"/><circle cx="6" cy="5" r="4" fill="#fff"/><circle cx="26" cy="5" r="4" fill="#fff"/><path d="M0 18 C0 12 3 10 6 10 C9 10 11 12 11 18Z" fill="#fff"/><path d="M21 18 C21 12 23 10 26 10 C29 10 32 12 32 18Z" fill="#fff"/><path d="M5 28 C5 17 9 13 16 13 C23 13 27 17 27 28Z" fill="#fff"/></svg>
<svg style="position:absolute;left:1736px;top:1678px;" width="25" height="25" viewBox="0 0 25 25"><circle cx="12.5" cy="12.5" r="10.5" fill="none" stroke="#fff" stroke-width="4"/><path d="M13 6 V13.5 H8" fill="none" stroke="#fff" stroke-width="2.6"/></svg>
<svg style="position:absolute;left:2106px;top:1677px;" width="28" height="28" viewBox="0 0 28 28"><path d="M10 1 H18 V11 H23 L14 20 L5 11 H10Z" fill="#fff"/><path d="M0 17 H8 L14 23 L20 17 H28 V28 H0Z" fill="#fff"/><rect x="19" y="22.5" width="2" height="2" fill="#1e7e7c"/><rect x="23" y="22.5" width="2" height="2" fill="#1e7e7c"/></svg>
<svg style="position:absolute;left:2636px;top:1678px;" width="28" height="26" viewBox="0 0 28 26"><path d="M14 0 L23 9 H18 V18 H10 V9 H5Z" fill="#fff"/><path d="M0 16 H8 V21 H20 V16 H28 V26 H0Z" fill="#fff"/><rect x="19" y="21.5" width="2" height="2" fill="#1c5651"/><rect x="23" y="21.5" width="2" height="2" fill="#1c5651"/></svg>
<div style="position:absolute;left:0px;top:1744px;width:2736px;height:80px;background:#0b2428;"></div>
<svg style="position:absolute;left:32px;top:1768px;" width="33" height="33" viewBox="0 0 33 33"><path d="M0 4.5 L13.5 2.6 V15.5 H0Z M15 2.4 L32.5 0 V15.5 H15Z M0 17 H13.5 V30 L0 28.2Z M15 17 H32.5 V32.5 L15 30.2Z" fill="#fff"/></svg>
<div style="position:absolute;left:96px;top:1744px;width:688px;height:80px;background:#f2f3f3;box-sizing:border-box;border:2px solid #c9cbcb"></div>
<svg style="position:absolute;left:119px;top:1766px;" width="34" height="34" viewBox="0 0 34 34"><circle cx="21.5" cy="12" r="9.5" fill="none" stroke="#111" stroke-width="2.4"/><path d="M14.5 19 L2 31.5" stroke="#111" stroke-width="2.6"/></svg>
<div style="position:absolute;left:176px;top:1771.95px;font:normal 29px/29px 'Liberation Sans', sans-serif;color:#1a1a1a;white-space:pre;">Type here to search</div>
<svg style="position:absolute;left:620px;top:1744px;" width="162" height="80" viewBox="0 0 162 80"><defs><linearGradient id="lf" x1="0" y1="0" x2="1" y2="1"><stop offset="0" stop-color="#b6d818"/><stop offset="1" stop-color="#3d7d10"/></linearGradient><linearGradient id="vn" x1="0" y1="0" x2="1" y2="1"><stop offset="0" stop-color="#9a8420"/><stop offset="1" stop-color="#5a3a10"/></linearGradient><radialGradient id="fl" cx="0.5" cy="0.35" r="0.7"><stop offset="0" stop-color="#ffb030"/><stop offset="1" stop-color="#f0407a"/></radialGradient><linearGradient id="tr" x1="0" y1="0" x2="1" y2="0"><stop offset="0" stop-color="#a87a40"/><stop offset="1" stop-color="#6a4020"/></linearGradient></defs><path d="M25.7 20.5 Q26.7 26.5 33 27.8 Q26.7 29 25.7 35 Q24.7 29 18.4 27.8 Q24.7 26.5 25.7 20.5Z" fill="#e07af5"/><path d="M56 0 Q56 14 63 24 Q70 32 83 41 Q90 48 89.6 58" fill="none" stroke="url(#vn)" stroke-width="6.5"/><path d="M33.6 12.6 Q50 8 59.3 23.1 Q45 28 33.6 12.6Z" fill="url(#lf)"/><path d="M43.4 39 Q50 27 65 30.4 Q58 42 43.4 39Z" fill="url(#lf)"/><path d="M66.5 7.2 Q74 16 68.7 28 Q62 18 66.5 7.2Z" fill="url(#lf)"/><path d="M88.5 10.1 Q86 26 71.6 28 Q74 13 88.5 10.1Z" fill="url(#lf)"/><rect x="107" y="0" width="7" height="60" fill="url(#tr)"/><path d="M113 13 Q116 5 121.4 0" stroke="#9a7040" stroke-width="3" fill="none"/><path d="M91 5.8 Q108 9 107 27.5 Q92 24 91 5.8Z" fill="url(#lf)"/><path d="M114.2 31.8 Q118 21 128 22.4 Q124 33 114.2 31.8Z" fill="url(#lf)"/><circle cx="138" cy="10.1" r="4" fill="#6ad8ea"/><circle cx="65.9" cy="52" r="4" fill="#ffb000"/><path d="M6.9 51.3 Q22 50 27.5 63.6 Q14 64 6.9 51.3Z" fill="url(#lf)"/><g transform="translate(40.8 67.2)"><g fill="url(#fl)"><ellipse cx="0" cy="-12" rx="7.5" ry="11.5" transform="rotate(0)"/><ellipse cx="0" cy="-12" rx="7.5" ry="11.5" transform="rotate(72)"/><ellipse cx="0" cy="-12" rx="7.5" ry="11.5" transform="rotate(144)"/><ellipse cx="0" cy="-12" rx="7.5" ry="11.5" transform="rotate(216)"/><ellipse cx="0" cy="-12" rx="7.5" ry="11.5" transform="rotate(288)"/></g><circle r="6" fill="#ffe030"/><g fill="#1a4a9a"><circle cx="0" cy="-6" r="1.3"/><circle cx="5.2" cy="-3" r="1.3"/><circle cx="5.2" cy="3" r="1.3"/><circle cx="0" cy="6" r="1.3"/><circle cx="-5.2" cy="3" r="1.3"/><circle cx="-5.2" cy="-3" r="1.3"/></g></g><path d="M116 60 Q135 35 162 16 V80 H112Z" fill="#4a8a10"/><path d="M125 80 Q140 55 162 36 V80Z" fill="#a8b010"/><path d="M157 18 Q150 40 138 62 Q134 72 133 80" fill="none" stroke="#9ad8ff" stroke-width="3"/><ellipse cx="135" cy="78" rx="9" ry="4" fill="#e8f6ff"/><path d="M79 52 Q90 58 95 80 H82Z M88 35 Q108 45 113 80 H96Z M112 60 Q126 58 131 62 Q120 70 113 80Z" fill="url(#lf)"/><g transform="translate(135.9 34.3)"><g fill="url(#fl)"><ellipse cx="0" cy="-5" rx="3.2" ry="5" transform="rotate(0)"/><ellipse cx="0" cy="-5" rx="3.2" ry="5" transform="rotate(72)"/><ellipse cx="0" cy="-5" rx="3.2" ry="5" transform="rotate(144)"/><ellipse cx="0" cy="-5" rx="3.2" ry="5" transform="rotate(216)"/><ellipse cx="0" cy="-5" rx="3.2" ry="5" transform="rotate(288)"/></g><circle r="3" fill="#ffe030"/></g><g transform="translate(157.2 70.5)"><g fill="url(#fl)"><ellipse cx="0" cy="-7" rx="4.5" ry="7" transform="rotate(0)"/><ellipse cx="0" cy="-7" rx="4.5" ry="7" transform="rotate(72)"/><ellipse cx="0" cy="-7" rx="4.5" ry="7" transform="rotate(144)"/><ellipse cx="0" cy="-7" rx="4.5" ry="7" transform="rotate(216)"/><ellipse cx="0" cy="-7" rx="4.5" ry="7" transform="rotate(288)"/></g><circle r="4" fill="#ffe030"/></g></svg>
<svg style="position:absolute;left:816px;top:1768px;" width="32" height="32" viewBox="0 0 32 32"><circle cx="16" cy="16" r="13.5" fill="none" stroke="#fff" stroke-width="3.5"/></svg>
<svg style="position:absolute;left:911px;top:1769px;" width="34" height="30" viewBox="0 0 34 30"><path d="M1 1.5 H20 M1 28.5 H20 M1 26 V28.5 M20 26 V28.5 M1 1.5 V4 M20 1.5 V4" stroke="#fff" stroke-width="2" fill="none"/><rect x="2" y="7.5" width="21" height="15" fill="none" stroke="#fff" stroke-width="2.2"/><circle cx="30" cy="11" r="3" fill="#fff"/><path d="M30 2 V5 M30 16 V29" stroke="#fff" stroke-width="2"/></svg>
<svg style="position:absolute;left:1002px;top:1767px;" width="42" height="35" viewBox="0 0 42 35"><path d="M0 3 Q0 0 3 0 H14 L18 4 H40 Q42 4 42 6 V32 Q42 34 40 34 H2 Q0 34 0 32Z" fill="#ffc83d"/><rect x="0" y="8" width="42" height="26" rx="2" fill="#ffd967"/><path d="M7 34 V20 Q7 17 10 17 H32 Q35 17 35 20 V34 H28 V24 H14 V34Z" fill="#3a8ee6"/></svg>
<svg style="position:absolute;left:1090px;top:1761px;" width="37" height="46" viewBox="0 0 37 46"><defs><linearGradient id="ofl" x1="0" y1="0" x2="0" y2="1"><stop offset="0" stop-color="#7e0a0a"/><stop offset="0.55" stop-color="#c0202a"/><stop offset="1" stop-color="#d05aa8"/></linearGradient><linearGradient id="ofr" x1="0" y1="0" x2="0" y2="1"><stop offset="0" stop-color="#f39000"/><stop offset="0.45" stop-color="#e04e00"/><stop offset="1" stop-color="#d83b01"/></linearGradient><linearGradient id="ofb" x1="0" y1="0" x2="1" y2="0"><stop offset="0" stop-color="#f0283a"/><stop offset="1" stop-color="#9a0d14"/></linearGradient></defs><path d="M24 1 L2.5 8.5 Q0 9.4 0 12 V34 Q0 36.5 2.5 35.6 L9.5 33 V13 L24 8.8Z" fill="url(#ofl)"/><path d="M7 36.5 L22 44.5 Q24 45.5 24 43 V36.5Z" fill="url(#ofb)"/><path d="M22 0.6 L34 4.2 Q36 4.9 36 7.2 V37.8 Q36 40.2 34 40.8 L22 44.6Z" fill="url(#ofr)"/></svg>
<div style="position:absolute;left:1152px;top:1744px;width:83px;height:80px;background:#85713a;"></div>
<div style="position:absolute;left:1152px;top:1820px;width:83px;height:4px;background:#ff7300;"></div>
<svg style="position:absolute;left:1169px;top:1760px;" width="60" height="52" viewBox="0 0 60 52"><circle cx="24" cy="24" r="24" fill="#5865f2"/><path transform="translate(8.8 12.4) scale(0.228)" fill="#fff" d="M107.7,8.07A105.15,105.15,0,0,0,81.47,0a72.06,72.06,0,0,0-3.36,6.83A97.68,97.68,0,0,0,49,6.83,72.37,72.37,0,0,0,45.64,0,105.89,105.89,0,0,0,19.39,8.09C2.79,32.65-1.71,56.6.54,80.21h0A105.73,105.73,0,0,0,32.71,96.36,77.7,77.7,0,0,0,39.6,85.25a68.42,68.42,0,0,1-10.85-5.18c.91-.66,1.8-1.34,2.66-2a75.57,75.57,0,0,0,64.32,0c.87.71,1.76,1.39,2.66,2a68.68,68.68,0,0,1-10.87,5.19,77,77,0,0,0,6.89,11.1A105.25,105.25,0,0,0,126.6,80.22h0C129.24,52.84,122.09,29.11,107.7,8.07ZM42.45,65.69C36.18,65.69,31,60,31,53s5-12.74,11.43-12.74S54,46,53.89,53,48.84,65.69,42.45,65.69Zm42.24,0C78.41,65.69,73.25,60,73.25,53s5-12.74,11.44-12.74S96.23,46,96.12,53,91.08,65.69,84.69,65.69Z"/><circle cx="36" cy="36" r="13.6" fill="#ec5b5b"/><text x="36.5" y="43" font-size="19" font-family="Liberation Sans" fill="#fff" text-anchor="middle" font-weight="bold">9+</text></svg>
<svg style="position:absolute;left:1256px;top:1762px;" width="44" height="44" viewBox="0 0 44 44"><circle cx="22" cy="22" r="22" fill="#fbbc05"/><path d="M22 0 A22 22 0 0 1 44 22 L22 22Z" fill="#e5313a"/><path d="M0 22 A22 22 0 0 1 22 0 L22 22Z" fill="#1ea7f7"/><circle cx="22" cy="22" r="14" fill="#fff"/><circle cx="22" cy="20" r="3.5" fill="#222"/><rect x="20.5" y="21" width="3" height="7" fill="#222"/></svg>
<svg style="position:absolute;left:1345px;top:1761px;" width="37" height="46" viewBox="0 0 37 46"><path d="M24 1 L2.5 8.5 Q0 9.4 0 12 V34 Q0 36.5 2.5 35.6 L9.5 33 V13 L24 8.8Z" fill="url(#ofl)"/><path d="M7 36.5 L22 44.5 Q24 45.5 24 43 V36.5Z" fill="url(#ofb)"/><path d="M22 0.6 L34 4.2 Q36 4.9 36 7.2 V37.8 Q36 40.2 34 40.8 L22 44.6Z" fill="url(#ofr)"/></svg>
<svg style="position:absolute;left:1424px;top:1760px;" width="48" height="48" viewBox="0 0 48 48"><circle cx="24" cy="24" r="24" fill="#f6f6f6"/><g stroke-width="4.7" stroke-linecap="round" fill="none"><g stroke="#36c5f0"><path d="M10 20.25 H20.1"/><path d="M19.45 9.8 V11.2" stroke-width="5.6"/></g><g stroke="#2eb67d" transform="rotate(90 24 24)"><path d="M10 20.25 H20.1"/><path d="M19.45 9.8 V11.2" stroke-width="5.6"/></g><g stroke="#ecb22e" transform="rotate(180 24 24)"><path d="M10 20.25 H20.1"/><path d="M19.45 9.8 V11.2" stroke-width="5.6"/></g><g stroke="#e01e5a" transform="rotate(270 24 24)"><path d="M10 20.25 H20.1"/><path d="M19.45 9.8 V11.2" stroke-width="5.6"/></g></g></svg>
<svg style="position:absolute;left:1509px;top:1762px;" width="48" height="44" viewBox="0 0 48 44"><rect x="11" y="0" width="36" height="43" rx="3" fill="#ca64ea"/><rect x="36" y="12" width="11" height="31" fill="#ae4bd5"/><rect x="36" y="24" width="11" height="19" fill="#9332bf"/><rect x="0" y="9" width="24" height="25" rx="2" fill="#7719aa"/><text x="12" y="29" font-size="18" font-weight="bold" font-family="Liberation Sans" fill="#fff" text-anchor="middle">N</text></svg>
<div style="position:absolute;left:1500px;top:1820px;width:67px;height:4px;background:#8ee3e3;"></div>
<svg style="position:absolute;left:1595px;top:1762px;" width="44" height="44" viewBox="0 0 44 44"><g transform="translate(22 22) scale(1.0)"><path d="M0 -10 H19.6 A22 22 0 0 0 -18.46 -11.97 L-8.66 5 L0 0Z" fill="#ea4335"/><path d="M8.66 5 L-1.14 21.97 A22 22 0 0 0 19.6 -10 L0 -10 L0 0Z" fill="#fbc02d"/><path d="M-8.66 5 L-18.46 -11.97 A22 22 0 0 0 -1.14 21.97 L8.66 5 L0 0Z" fill="#34a853"/><circle r="10.2" fill="#fff"/><circle r="8" fill="#3a7be8"/></g></svg>
<div style="position:absolute;left:1662px;top:1744px;width:83px;height:80px;background:#0b6a6f;"></div>
<div style="position:absolute;left:1662px;top:1820px;width:83px;height:4px;background:#8ee3e3;"></div>
<svg style="position:absolute;left:1681px;top:1762px;" width="44" height="44" viewBox="0 0 44 44"><g transform="translate(22 22) scale(1.0)"><path d="M0 -10 H19.6 A22 22 0 0 0 -18.46 -11.97 L-8.66 5 L0 0Z" fill="#ea4335"/><path d="M8.66 5 L-1.14 21.97 A22 22 0 0 0 19.6 -10 L0 -10 L0 0Z" fill="#fbc02d"/><path d="M-8.66 5 L-18.46 -11.97 A22 22 0 0 0 -1.14 21.97 L8.66 5 L0 0Z" fill="#34a853"/><circle r="10.2" fill="#fff"/><circle r="8" fill="#3a7be8"/></g></svg>
<svg style="position:absolute;left:1697px;top:1779px;" width="34" height="34" viewBox="0 0 34 34"><defs><clipPath id="av2"><circle cx="17" cy="17" r="16"/></clipPath></defs><g clip-path="url(#av2)"><rect width="34" height="34" fill="#a9bdd0"/><rect y="16" width="34" height="18" fill="#6c8aa0"/><rect x="6" y="2" width="3" height="26" fill="#9a5a50"/><rect x="2" y="8" width="30" height="1.5" fill="#9a5a50"/><circle cx="20" cy="17" r="4.5" fill="#2e2a2a"/><path d="M10 34 C11 25 15 23 20 23 C25 23 29 25 30 34Z" fill="#24242c"/></g></svg>
<svg style="position:absolute;left:1763px;top:1760px;" width="50" height="50" viewBox="0 0 50 50"><g transform="rotate(45 25 25)"><rect x="7" y="7" width="17.3" height="17.3" rx="2.5" fill="#f47c7c"/><rect x="25.7" y="7" width="17.3" height="17.3" rx="2.5" fill="#8bd460"/><rect x="7" y="25.7" width="17.3" height="17.3" rx="2.5" fill="#75a8f5"/><rect x="25.7" y="25.7" width="17.3" height="17.3" rx="2.5" fill="#fde27d"/></g><path d="M17 9 L25 17 V36 M25 25 L33 27" stroke="#222" stroke-width="2.4" fill="none"/><circle cx="25" cy="16" r="3.3" fill="#222"/><circle cx="34" cy="25.5" r="3.3" fill="#222"/><circle cx="25" cy="34.5" r="3.3" fill="#222"/></svg>
<div style="position:absolute;left:1755px;top:1820px;width:66px;height:4px;background:#8ee3e3;"></div>
<svg style="position:absolute;left:1852px;top:1763px;" width="41" height="41" viewBox="0 0 41 41"><defs><linearGradient id="ij" x1="0" y1="0" x2="1" y2="1"><stop offset="0" stop-color="#ffd23f"/><stop offset="0.12" stop-color="#ff318c"/><stop offset="0.45" stop-color="#2e7cf6"/><stop offset="1" stop-color="#087cfa"/></linearGradient><linearGradient id="ij2" x1="0" y1="0" x2="1" y2="0"><stop offset="0.6" stop-color="#ff318c" stop-opacity="0"/><stop offset="1" stop-color="#21d0f5"/></linearGradient></defs><rect width="41" height="41" fill="url(#ij)"/><rect width="41" height="41" fill="url(#ij2)"/><rect x="5" y="5" width="31" height="31" fill="#000"/><rect x="5" y="5" width="31" height="31" fill="#3a0a2a" opacity="0.5"/><text x="8" y="21" font-size="16" font-weight="bold" font-family="Liberation Mono" fill="#fff" textLength="16" lengthAdjust="spacingAndGlyphs">IJ</text><rect x="9" y="30" width="11" height="2" fill="#fff"/></svg>
<div style="position:absolute;left:1839px;top:1820px;width:66px;height:4px;background:#8ee3e3;"></div>
<svg style="position:absolute;left:1970px;top:1764px;" width="50" height="44" viewBox="0 0 50 44"><defs><linearGradient id="cl" x1="0" y1="0" x2="1" y2="1"><stop offset="0" stop-color="#f4fbff"/><stop offset="1" stop-color="#a9d4ee"/></linearGradient></defs><circle cx="14" cy="13" r="10" fill="#f2c230"/><path d="M9 34 C1 34 1 24 8 22.5 C8.5 14 19 11.5 24 17.5 C28 12.5 39 14 39 23 C44.5 23.5 44.5 34 38 34Z" fill="url(#cl)"/><circle cx="40" cy="37.3" r="6.5" fill="#e81123"/></svg>
<div style="position:absolute;left:2033px;top:1773.41px;font:normal 25.5px/25.5px 'Liberation Sans', sans-serif;color:#fff;white-space:pre;">77°F</div>
<svg style="position:absolute;left:2130px;top:1778px;" width="28" height="15" viewBox="0 0 28 15"><path d="M1.5 13.5 L14 1.5 L26.5 13.5" fill="none" stroke="#fff" stroke-width="2"/></svg>
<svg style="position:absolute;left:2196px;top:1767px;" width="25" height="34" viewBox="0 0 25 34"><path d="M4 5 A12 12 0 0 1 21 5 M4 29 A12 12 0 0 0 21 29" fill="none" stroke="#fff" stroke-width="1.8"/><rect x="2" y="11" width="14" height="12" rx="3" fill="none" stroke="#fff" stroke-width="2"/><path d="M16 14 L23 10 V24 L16 20" fill="none" stroke="#fff" stroke-width="2"/></svg>
<svg style="position:absolute;left:2260px;top:1772px;" width="28" height="26" viewBox="0 0 28 26"><path d="M2 25 A22 22 0 0 1 25 2 M7 25 A17 17 0 0 1 25 7.5 M12.5 25 A11.5 11.5 0 0 1 25 13" fill="none" stroke="#fff" stroke-width="2"/><circle cx="23" cy="23" r="2.8" fill="#fff"/></svg>
<svg style="position:absolute;left:2318px;top:1767px;" width="34" height="34" viewBox="0 0 34 34"><path d="M1.5 6 L32 1.5 V29 L1.5 31Z" fill="none" stroke="#fff" stroke-width="2"/><path d="M12 15 A6 6 0 0 1 22 13 M22 19 A6 6 0 0 1 12 21" fill="none" stroke="#fff" stroke-width="1.8"/><circle cx="25" cy="27" r="6" fill="#ff8c00"/></svg>
<svg style="position:absolute;left:2384px;top:1775px;" width="32" height="20" viewBox="0 0 32 20"><rect x="1" y="1" width="26" height="17" fill="none" stroke="#fff" stroke-width="2"/><rect x="4" y="4" width="11" height="11" fill="#fff"/><rect x="28" y="6" width="3" height="7" fill="#fff"/></svg>
<svg style="position:absolute;left:2446px;top:1771px;" width="30" height="28" viewBox="0 0 30 28"><path d="M1.5 9 H6 L13 2 V26 L6 19 H1.5Z" fill="none" stroke="#fff" stroke-width="2"/><path d="M18 10 L27 19 M27 10 L18 19" stroke="#fff" stroke-width="2"/></svg>
<div style="position:absolute;left:2519px;top:1755.11px;font:normal 23.5px/23.5px 'Liberation Sans', sans-serif;color:#fff;white-space:pre;">5:58 PM</div>
<div style="position:absolute;left:2508px;top:1791.85px;font:normal 23.8px/23.8px 'Liberation Sans', sans-serif;color:#fff;white-space:pre;">6/22/2022</div>
<svg style="position:absolute;left:2653px;top:1766px;" width="52" height="50" viewBox="0 0 52 50"><path d="M2 3 H33 V26 H12 L6 32 V26 H2Z" fill="#fff"/><path d="M8 9 H27 M8 14 H27 M8 19 H22" stroke="#0b2428" stroke-width="2"/><circle cx="31" cy="32.2" r="15.5" fill="#0b6468" stroke="#9ab8b8" stroke-width="1.2"/><path d="M19.5 21.5 A15.5 15.5 0 0 1 31 16.7 V32.2 L21 39Z" fill="#4aa0a4" opacity="0.8"/><text x="31.5" y="40.5" font-size="22" font-family="Liberation Sans" fill="#fff" text-anchor="middle" font-weight="bold">3</text></svg>
<div style="position:absolute;left:2725px;top:1744px;width:2px;height:80px;background:#3b4f52;"></div>
</body></html>
